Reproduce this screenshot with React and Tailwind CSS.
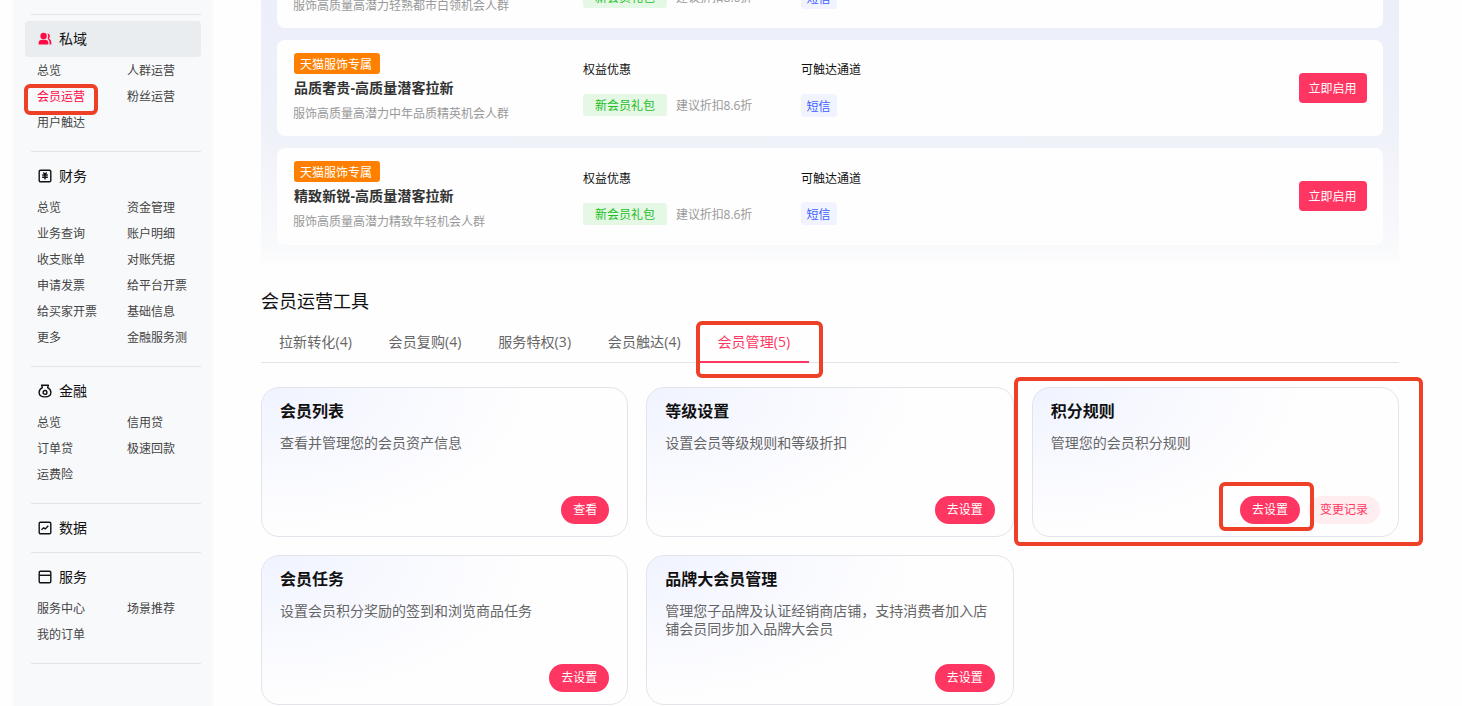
import React from 'react';

const ICONS = {
  crm: (
    <svg viewBox="0 0 14 14" className="w-3.5 h-3.5 text-[#ff0a43]" fill="currentColor">
      <circle cx="5.6" cy="4" r="3.2" />
      <path d="M.6 12.6V11c0-2 1.500-3.200 3.400-3.200h3c1.900 0 3.300 1.200 3.300 3.200v1.600z" />
      <path d="M9.300 1.200c1.700.3 2.600 1.500 2.600 2.900 0 1-.4 1.800-1 2.400 1.500.8 2.400 2.200 2.400 4v2.100h-1.800v-2c0-1.600-.7-3-2-3.800 1-1.500 1-4-.2-5.600z" />
    </svg>
  ),
  finance: (
    <svg viewBox="0 0 14 14" className="w-3.5 h-3.5" fill="none" stroke="currentColor" strokeWidth="1.4">
      <rect x="1.2" y="1.2" width="11.6" height="11.6" rx="1.3" />
      <path d="m5.300 3.600 1.700 1.600 1.700-1.600M4.200 6h5.600M4.200 8.200h5.600M7 5v5.600" strokeWidth="1.4" />
    </svg>
  ),
  loan: (
    <svg viewBox="0 0 14 14" className="w-3.5 h-3.5" fill="none" stroke="currentColor" strokeWidth="1.4">
      <path d="M3.600 1.200h6.800l-.8 2.500c2 .9 3.300 2.500 3.300 4.700 0 2.900-2 4.500-5.900 4.500s-5.900-1.600-5.900-4.500c0-2.200 1.300-3.800 3.300-4.700z" strokeLinejoin="round" />
      <circle cx="7" cy="8.400" r="1.900" />
    </svg>
  ),
  data: (
    <svg viewBox="0 0 14 14" className="w-3.5 h-3.5" fill="none" stroke="currentColor" strokeWidth="1.4">
      <rect x="1.2" y="1.2" width="11.6" height="11.6" rx="1.3" />
      <path d="m3.500 8.800 2.100-2 1.700 1.100 3-3.100" />
    </svg>
  ),
  service: (
    <svg viewBox="0 0 14 14" className="w-3.5 h-3.5" fill="none" stroke="currentColor" strokeWidth="1.4">
      <rect x="1.2" y="1.2" width="11.6" height="11.6" rx="1.3" />
      <path d="M1.200 5.300h11.600" />
    </svg>
  ),
};

const MENU = [
  { icon: 'crm', title: '私域', active: true, items: ['总览', '人群运营', '会员运营', '粉丝运营', '用户触达'] },
  {
    icon: 'finance',
    title: '财务',
    items: [
      '总览', '资金管理', '业务查询', '账户明细', '收支账单', '对账凭据',
      '申请发票', '给平台开票', '给买家开票', '基础信息', '更多', '金融服务测',
    ],
  },
  { icon: 'loan', title: '金融', items: ['总览', '信用贷', '订单贷', '极速回款', '运费险'] },
  { icon: 'data', title: '数据', items: [] },
  { icon: 'service', title: '服务', items: ['服务中心', '场景推荐', '我的订单'] },
];

const PLANS = [
  { name: '轻熟白领-高质量潜客拉新', desc: '服饰高质量高潜力轻熟都市白领机会人群' },
  { name: '品质奢贵-高质量潜客拉新', desc: '服饰高质量高潜力中年品质精英机会人群' },
  { name: '精致新锐-高质量潜客拉新', desc: '服饰高质量高潜力精致年轻机会人群' },
];

const TABS = ['拉新转化(4)', '会员复购(4)', '服务特权(3)', '会员触达(4)', '会员管理(5)'];

const TOOLS = [
  { title: '会员列表', desc: '查看并管理您的会员资产信息', action: '查看' },
  { title: '等级设置', desc: '设置会员等级规则和等级折扣', action: '去设置' },
  { title: '积分规则', desc: '管理您的会员积分规则', action: '去设置', extra: '变更记录' },
  { title: '会员任务', desc: '设置会员积分奖励的签到和浏览商品任务', action: '去设置' },
  { title: '品牌大会员管理', desc: '管理您子品牌及认证经销商店铺，支持消费者加入店铺会员同步加入品牌大会员', action: '去设置' },
];

function MenuSection({ icon, title, active, items }) {
  return (
    <section className="px-3 pt-1.5">
      <div className={`h-9 flex items-center gap-[7px] pl-[13px] rounded text-sm text-[#111] ${active ? 'bg-[#e9edf0]' : ''}`}>
        {ICONS[icon]}
        <span>{title}</span>
      </div>
      <div className="grid grid-cols-[90px_1fr] pl-3 text-xs text-[#444] whitespace-nowrap">
        {items.map(item => (
          <span
            key={item}
            className={`h-[26px] leading-7 ${item === '会员运营' ? 'text-[#ff0a43]' : ''}`}
          >
            {item}
          </span>
        ))}
      </div>
      <div className={`ml-1.5 border-b border-[#e2e4ea] ${items.length ? 'h-[17px]' : 'h-[7px]'}`} />
    </section>
  );
}

function PlanCard({ name, desc }) {
  return (
    <div className="group h-24 last:h-[97px] flex bg-[#fefefe] rounded-lg px-4 text-xs">
      <div className="w-[290px] pt-[13px] pl-px">
        <div className="w-[86px] h-[21px] leading-[24px] pl-1.5 rounded-[3px] bg-[#ff8000] text-white">天猫服饰专属</div>
        <div className="text-sm leading-7 font-bold tracking-[0.1px] text-[#333]">{name}</div>
        <div className="leading-6 text-[#999] -ml-px">{desc}</div>
      </div>
      <div className="w-[218px] pt-5 group-last:pt-[21px]">
        <div className="leading-5 text-[#111]">权益优惠</div>
        <div className="flex mt-3.5 gap-[9px]">
          <span className="h-[22px] px-3 leading-6 rounded-[3px] bg-[#e5f7e5] text-[#1bbf1f]">新会员礼包</span>
          <span className="h-[22px] leading-6 text-[#999] tracking-[-0.1px]">建议折扣8.6折</span>
        </div>
      </div>
      <div className="pt-5 group-last:pt-[21px]">
        <div className="leading-5 text-[#111]">可触达通道</div>
        <div className="w-9 h-[23px] mt-3.5 group-last:mt-[13px] leading-[26px] pl-[5.5px] rounded-[3px] bg-[#f1f4ff] text-[#3d5eff]">短信</div>
      </div>
      <button className="w-[68px] h-[30px] ml-auto mt-[33px] pt-px pr-px rounded bg-[#ff3661] text-white">立即启用</button>
    </div>
  );
}

function ToolCard({ title, desc, action, extra }) {
  return (
    <div className="h-[150px] flex flex-col border border-[#e2e4ec] rounded-[18px] px-[18px] pt-[11px] pb-3 bg-[radial-gradient(ellipse_75%_100%_at_0%_0%,#f0f3ff_0%,#f8f9ff_50%,#fefefe_100%)]">
      <h3 className="text-base leading-6 font-bold text-[#111]">{title}</h3>
      <p className="mt-[11px] text-sm leading-[18px] text-[#666]">{desc}</p>
      <div className="mt-auto flex justify-end gap-2 text-xs">
        <button className="h-7 px-3 rounded-full bg-[#ff3661] text-white">{action}</button>
        {extra && <button className="h-7 px-3 rounded-full bg-[#ffedf0] text-[#ff3661]">{extra}</button>}
      </div>
    </div>
  );
}

export default function App() {
  return (
    <div className="relative flex w-[1462px] h-[706px] overflow-hidden bg-[#fefefe] font-['Open_Sans','Noto_Sans_CJK_SC',sans-serif]">
      <aside className="w-[200px] ml-[13px] shrink-0 bg-[#f8f9fb]">
        <div className="h-[15px] ml-[18px] mr-3 border-b border-[#e2e4ea]" />
        {MENU.map(section => <MenuSection key={section.title} {...section} />)}
      </aside>

      <main className="w-[1138px] ml-12 shrink-0">
        <div className="h-[270px] flex flex-col overflow-hidden justify-end pb-[25px] px-4 bg-[linear-gradient(180deg,#eceffa_0%,#eff1f9_45%,#f3f5fa_65%,#f8f9fb_90%,#fefefe_100%)]">
          <div className="flex flex-col gap-3">
            {PLANS.map(plan => <PlanCard key={plan.name} {...plan} />)}
          </div>
        </div>

        <h2 className="mt-[17px] text-lg leading-7 text-[#111]">会员运营工具</h2>
        <div className="h-12 flex border-b border-[#e2e4ea] text-sm text-[#666]">
          {TABS.map((tab, i) => (
            <div
              key={tab}
              className={`w-[109.6px] h-12 pt-[17px] pl-[18px] leading-5 tracking-[0.1px] whitespace-nowrap ${
                i === 4 ? 'border-b-2 border-[#ff3661] text-[#ff3661]' : ''
              }`}
            >
              {tab}
            </div>
          ))}
        </div>
        <div className="mt-6 grid grid-cols-3 gap-[18px]">
          {TOOLS.map(tool => <ToolCard key={tool.title} {...tool} />)}
        </div>
      </main>

      {/* callout frames */}
      <div className="absolute left-[24px] top-[84px] w-[74px] h-[31px] border-4 border-[#ee4027] rounded-[6px]" />
      <div className="absolute left-[696px] top-[321px] w-[127px] h-[57px] border-4 border-[#ee4027] rounded-[6px]" />
      <div className="absolute left-[1014px] top-[377px] w-[409px] h-[169px] border-4 border-[#ee4027] rounded-[6px]" />
      <div className="absolute left-[1219px] top-[482px] w-[95px] h-[49px] border-4 border-[#ee4027] rounded-[6px]" />
    </div>
  );
}
